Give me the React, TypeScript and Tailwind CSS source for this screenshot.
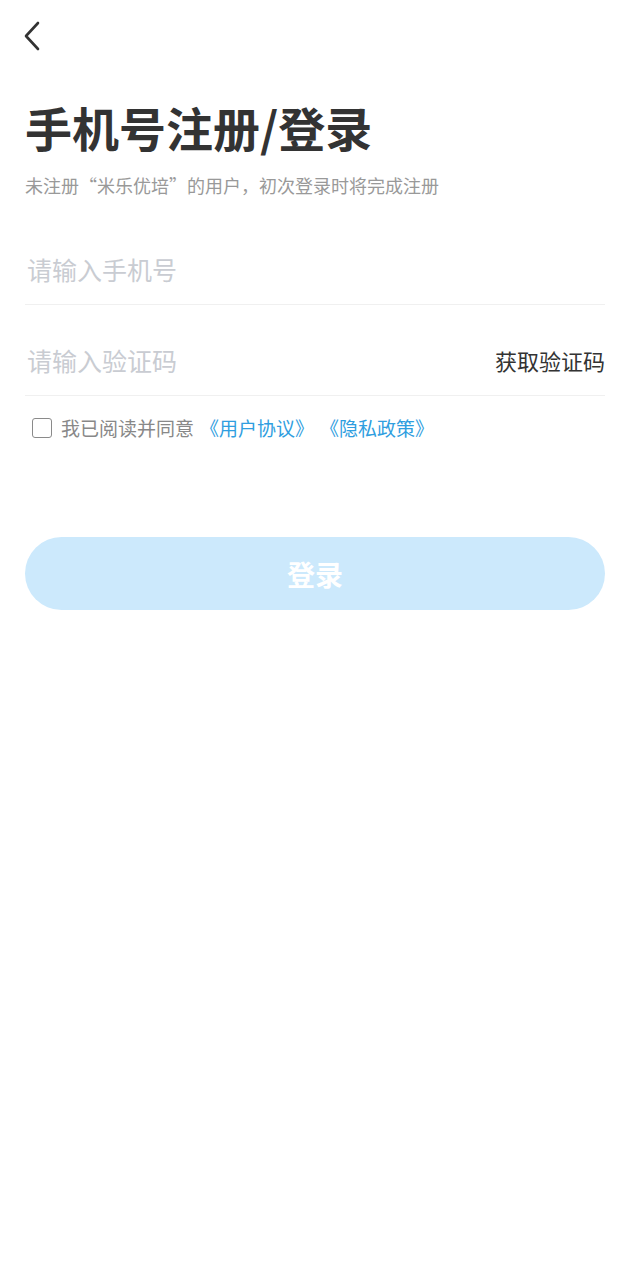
export default function App() {
  const font = { fontFamily: '"Noto Sans CJK SC", "Noto Sans", sans-serif' };
  return (
    <div className="min-h-[1280px] w-full bg-white" style={font}>
      {/* Back */}
      <div className="h-[70px] pl-[22px] pt-[20px]">
        <svg width="24" height="32" viewBox="0 0 24 32" fill="none">
          <path d="M16 3 L4 16 L16 29" stroke="#333" strokeWidth="2.6" strokeLinecap="round" strokeLinejoin="round" />
        </svg>
      </div>

      <div className="px-[25px]">
        <h1 className="mt-[27px] text-[47px] font-bold leading-[60px] text-[#333]">手机号注册/登录</h1>
        <p className="mt-[15px] text-[18px] leading-[26px] text-[#999]">未注册“米乐优培”的用户，初次登录时将完成注册</p>

        {/* Phone */}
        <div className="mt-[37px] flex h-[70px] items-center border-b border-[#f0f0f0]">
          <span className="pl-[2px] text-[25px] text-[#c9ccd2]">请输入手机号</span>
        </div>

        {/* Code */}
        <div className="mt-[21px] flex h-[70px] items-center justify-between border-b border-[#f0f0f0]">
          <span className="pl-[2px] text-[25px] text-[#c9ccd2]">请输入验证码</span>
          <span className="text-[22px] text-[#333]">获取验证码</span>
        </div>

        {/* Agreement */}
        <div className="mt-[20px] flex items-center pl-[7px]">
          <span className="h-[20px] w-[20px] rounded-[3px] border-[1.5px] border-[#8a8a8a]" />
          <span className="ml-[9px] text-[19px] leading-[24px] text-[#888]">我已阅读并同意</span>
          <span className="ml-[6px] text-[19px] leading-[24px] text-[#2f9ee0]">《用户协议》</span>
          <span className="ml-[6px] text-[19px] leading-[24px] text-[#2f9ee0]">《隐私政策》</span>
        </div>

        {/* Login button */}
        <button className="mt-[97px] flex h-[73px] w-full items-center justify-center rounded-full bg-[#cce9fc] text-[28px] font-bold text-white">
          登录
        </button>
      </div>
    </div>
  );
}
